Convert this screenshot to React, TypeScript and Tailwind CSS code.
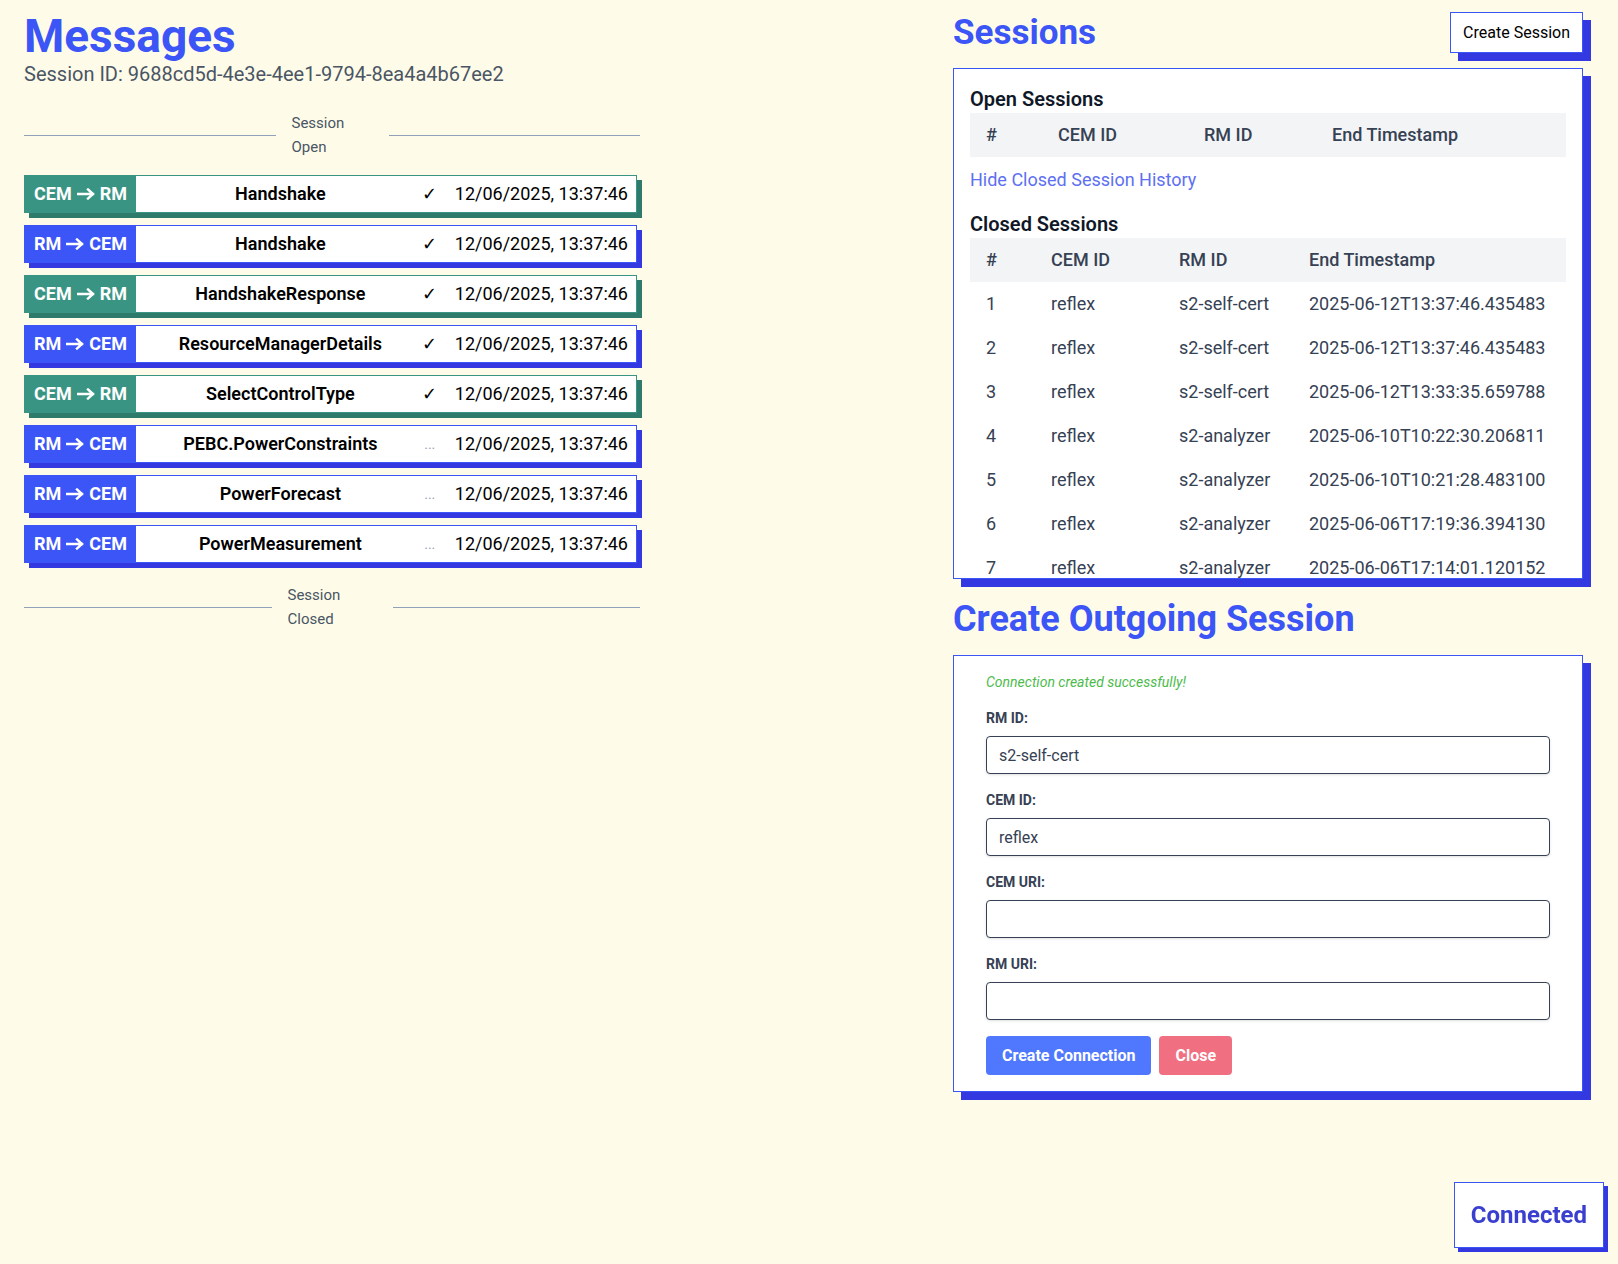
import { useState } from 'react';

// Message log for the current session
const messages = [
    { from: 'CEM', to: 'RM', name: 'Handshake', acked: true },
    { from: 'RM', to: 'CEM', name: 'Handshake', acked: true },
    { from: 'CEM', to: 'RM', name: 'HandshakeResponse', acked: true },
    { from: 'RM', to: 'CEM', name: 'ResourceManagerDetails', acked: true },
    { from: 'CEM', to: 'RM', name: 'SelectControlType', acked: true },
    { from: 'RM', to: 'CEM', name: 'PEBC.PowerConstraints', acked: false },
    { from: 'RM', to: 'CEM', name: 'PowerForecast', acked: false },
    { from: 'RM', to: 'CEM', name: 'PowerMeasurement', acked: false },
];

const closedSessions = [
    { id: 1, cem: 'reflex', rm: 's2-self-cert', end: '2025-06-12T13:37:46.435483' },
    { id: 2, cem: 'reflex', rm: 's2-self-cert', end: '2025-06-12T13:37:46.435483' },
    { id: 3, cem: 'reflex', rm: 's2-self-cert', end: '2025-06-12T13:33:35.659788' },
    { id: 4, cem: 'reflex', rm: 's2-analyzer', end: '2025-06-10T10:22:30.206811' },
    { id: 5, cem: 'reflex', rm: 's2-analyzer', end: '2025-06-10T10:21:28.483100' },
    { id: 6, cem: 'reflex', rm: 's2-analyzer', end: '2025-06-06T17:19:36.394130' },
    { id: 7, cem: 'reflex', rm: 's2-analyzer', end: '2025-06-06T17:14:01.120152' },
];

const Divider = ({ label, width }: { label: string; width: string }) => (
    <div className="flex items-center">
        <div className="flex-1 h-px bg-slate-400" />
        <div className={`${width} pl-4 text-left text-[15px] leading-6 text-gray-600`}>
            <div>Session</div>
            <div>{label}</div>
        </div>
        <div className="flex-1 h-px bg-slate-400" />
    </div>
);

const Arrow = () => (
    <svg width="18" height="12" viewBox="0 0 18 12" className="mx-[5px]" fill="none">
        <path d="M1 6h15M11 1.5L16 6l-5 4.5" stroke="white" strokeWidth="2.4" strokeLinecap="square" />
    </svg>
);

const MessageRow = ({ from, to, name, acked }: (typeof messages)[number]) => {
    const fromCem = from === 'CEM';
    return (
        <div
            className={`flex items-center w-[613px] h-[38px] bg-white border ${
                fromCem
                    ? 'border-[#3a9484] shadow-[5px_5px_0_#2e7a6b]'
                    : 'border-[#3c55f6] shadow-[5px_5px_0_#3338e0]'
            }`}
        >
            <div
                className={`w-[111px] h-full flex items-center justify-center text-white font-bold text-lg whitespace-nowrap ${
                    fromCem ? 'bg-[#3a9484]' : 'bg-[#3c55f6]'
                }`}
            >
                {from}
                <Arrow />
                {to}
            </div>
            <div className="flex-1 pl-2 text-center text-lg font-semibold text-black">{name}</div>
            {acked ? (
                <span className="w-[26px] text-center text-lg text-black">✓</span>
            ) : (
                <span className="w-[26px] text-center text-sm text-gray-400">...</span>
            )}
            <span className="ml-3 pr-2 text-lg text-black">12/06/2025, 13:37:46</span>
        </div>
    );
};

const Field = ({ label, value }: { label: string; value: string }) => (
    <div className="mb-4">
        <label className="block mb-2 text-sm font-bold text-gray-700">{label}</label>
        <input
            defaultValue={value}
            className="w-full h-[38px] px-3 text-base text-gray-700 bg-white border border-gray-700 rounded shadow-sm"
        />
    </div>
);

export default function App() {
    const [showClosed, setShowClosed] = useState(true);

    return (
        <div
            className="min-h-screen bg-[#fefce8] flex justify-between pl-6 pr-[35px] pt-3"
            style={{ fontFamily: 'Roboto, "Noto Sans", sans-serif' }}
        >
            {/* Messages */}
            <div className="w-[616px]">
                <h1 className="text-[46px] leading-[48px] font-bold text-[#3c55f6]">Messages</h1>
                <p className="text-xl leading-7 text-gray-600">
                    Session ID: 9688cd5d-4e3e-4ee1-9794-8ea4a4b67ee2
                </p>

                <div className="mt-[23px]">
                    <Divider label="Open" width="w-[113px]" />
                </div>

                <div className="mt-4 space-y-3">
                    {messages.map((m, i) => (
                        <MessageRow key={i} {...m} />
                    ))}
                </div>

                <div className="mt-5">
                    <Divider label="Closed" width="w-[121px]" />
                </div>
            </div>

            {/* Sessions */}
            <div className="w-[630px]">
                <div className="flex items-center justify-between h-[41px] mb-[15px]">
                    <h2 className="text-[35px] leading-10 font-bold text-[#3c55f6]">Sessions</h2>
                    <button className="h-[41px] px-3 bg-white border border-[#3c55f6] shadow-[8px_8px_0_#3338e0] text-base text-black">
                        Create Session
                    </button>
                </div>

                <div className="h-[511px] overflow-hidden bg-white border border-[#3c55f6] shadow-[8px_8px_0_#3338e0] px-4 pt-4">
                    <h3 className="text-xl font-semibold text-gray-900">Open Sessions</h3>
                    <table className="w-full table-fixed text-left text-lg text-gray-700">
                        <thead className="bg-gray-100">
                            <tr>
                                <th className="w-[72px] px-4 py-2 font-medium">#</th>
                                <th className="w-[146px] px-4 py-2 font-medium">CEM ID</th>
                                <th className="w-[128px] px-4 py-2 font-medium">RM ID</th>
                                <th className="px-4 py-2 font-medium">End Timestamp</th>
                            </tr>
                        </thead>
                    </table>

                    <button
                        onClick={() => setShowClosed(!showClosed)}
                        className="mt-[9px] text-lg text-[#5d70f2]"
                    >
                        {showClosed ? 'Hide' : 'Show'} Closed Session History
                    </button>

                    {showClosed && (
                        <>
                            <h3 className="mt-4 text-xl font-semibold text-gray-900">Closed Sessions</h3>
                            <table className="w-full table-fixed text-left text-lg text-gray-700">
                                <thead className="bg-gray-100">
                                    <tr>
                                        <th className="w-[65px] px-4 py-2 font-medium">#</th>
                                        <th className="w-[128px] px-4 py-2 font-medium">CEM ID</th>
                                        <th className="w-[130px] px-4 py-2 font-medium">RM ID</th>
                                        <th className="px-4 py-2 font-medium">End Timestamp</th>
                                    </tr>
                                </thead>
                                <tbody>
                                    {closedSessions.map((s) => (
                                        <tr key={s.id}>
                                            <td className="px-4 py-2">{s.id}</td>
                                            <td className="px-4 py-2">{s.cem}</td>
                                            <td className="px-4 py-2">{s.rm}</td>
                                            <td className="px-4 py-2">{s.end}</td>
                                        </tr>
                                    ))}
                                </tbody>
                            </table>
                        </>
                    )}
                </div>

                <h2 className="mt-5 mb-4 text-4xl leading-10 font-bold text-[#3c55f6]">
                    Create Outgoing Session
                </h2>

                <div className="bg-white border border-[#3c55f6] shadow-[8px_8px_0_#3338e0] px-8 pt-4 pb-4">
                    <p className="mb-4 text-sm italic text-[#4cbb4c]">Connection created successfully!</p>
                    <Field label="RM ID:" value="s2-self-cert" />
                    <Field label="CEM ID:" value="reflex" />
                    <Field label="CEM URI:" value="" />
                    <Field label="RM URI:" value="" />
                    <div className="flex gap-2">
                        <button className="h-[39px] px-4 rounded bg-[#5078fe] text-base font-bold text-white">
                            Create Connection
                        </button>
                        <button className="h-[39px] px-4 rounded bg-[#f07082] text-base font-bold text-white">
                            Close
                        </button>
                    </div>
                </div>
            </div>

            {/* Connection status */}
            <div className="fixed bottom-4 right-[14px] px-4 py-4 bg-white border border-[#3c55f6] shadow-[4px_4px_0_#3338e0]">
                <span className="text-2xl font-bold text-[#3a3fcf]">Connected</span>
            </div>
        </div>
    );
}
